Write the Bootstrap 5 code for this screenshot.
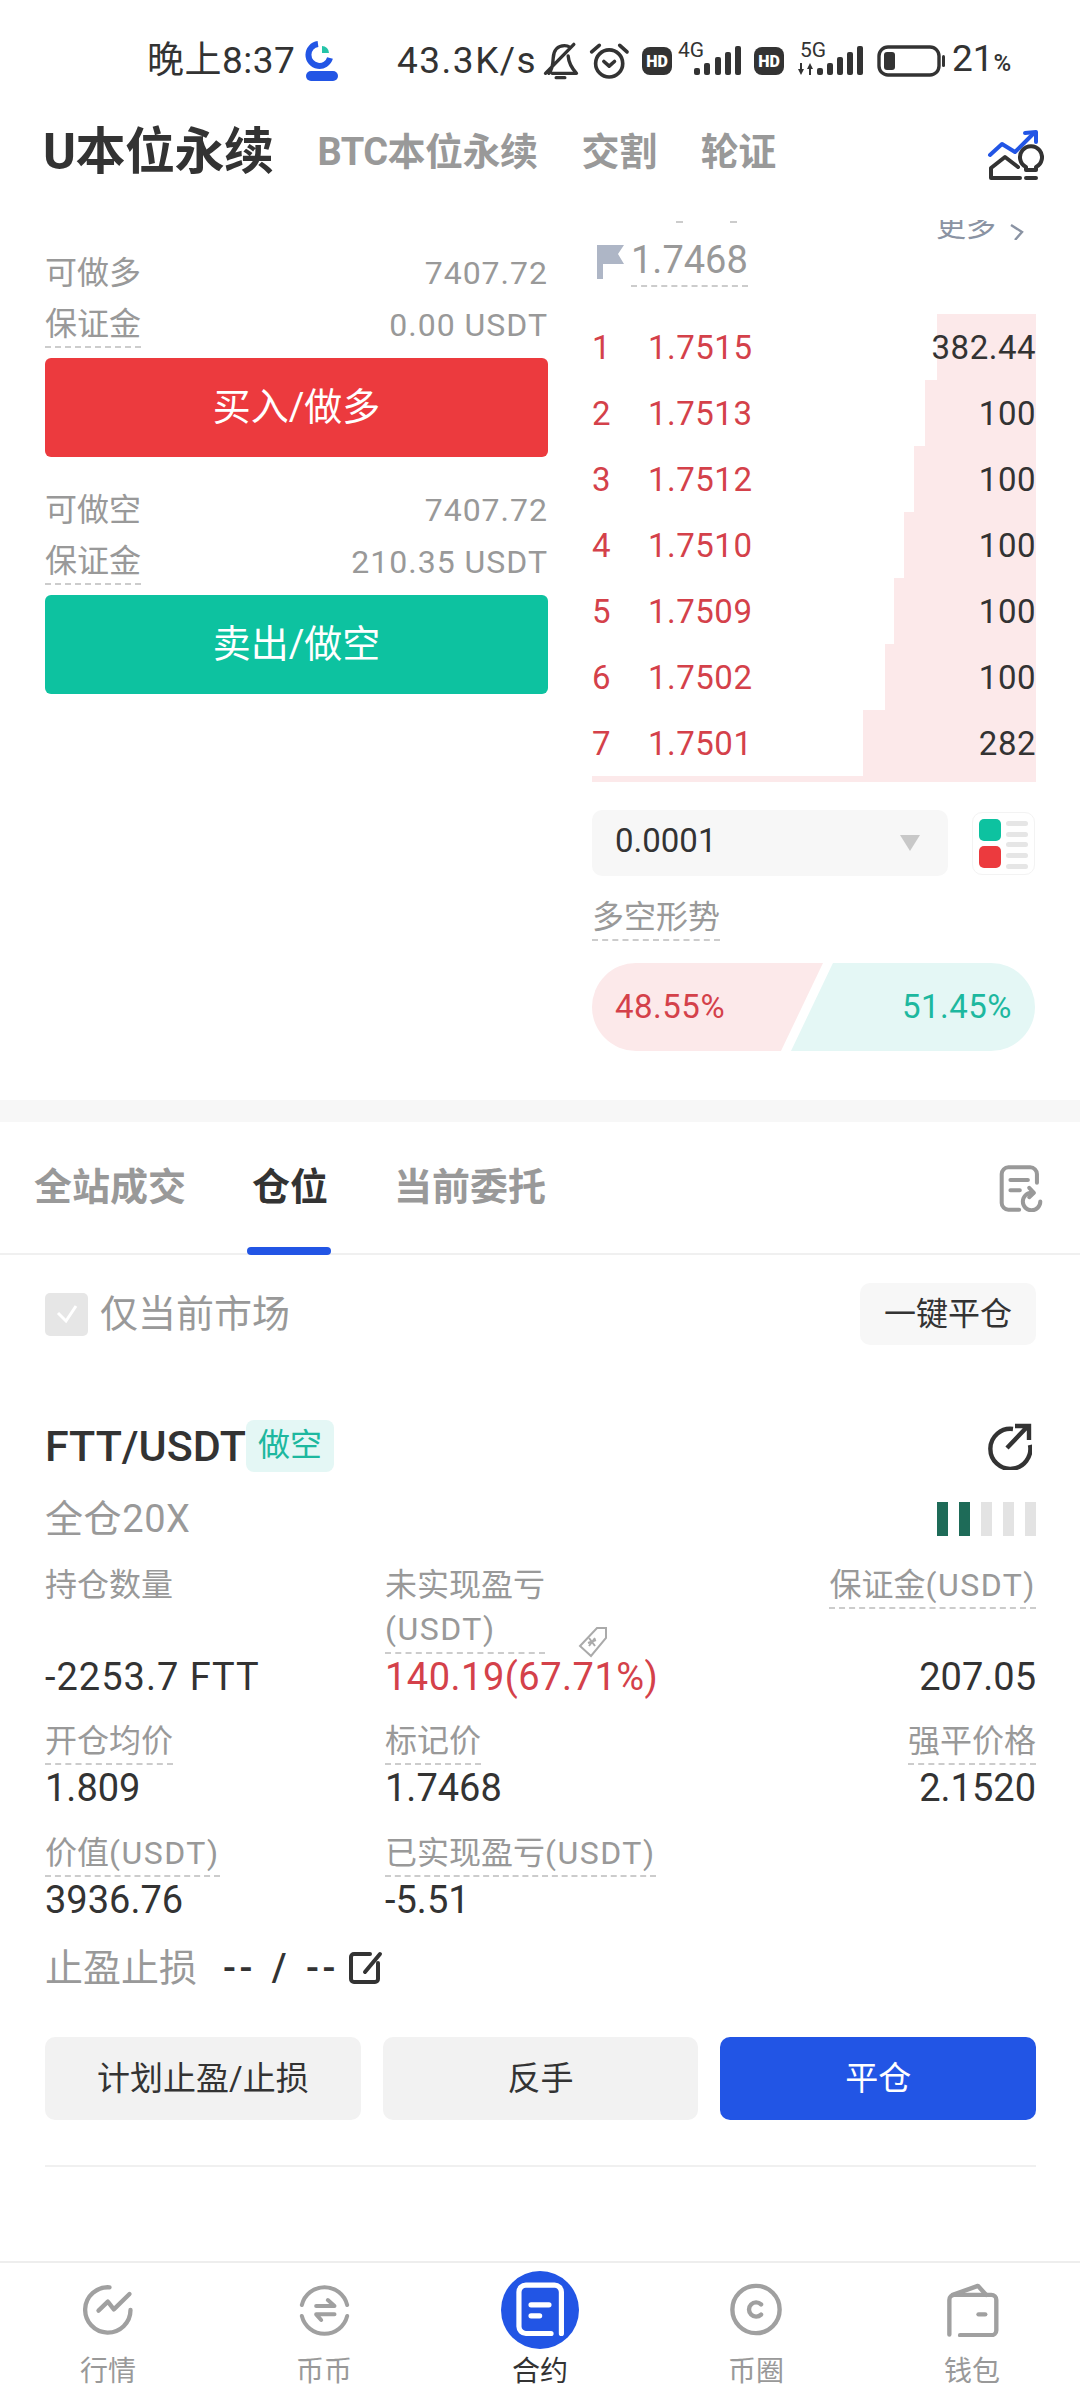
<!DOCTYPE html>
<html lang="zh">

<head>
  <meta charset="UTF-8" />
  <meta name="viewport" content="width=device-width, initial-scale=1" />
  <title>合约</title>
  <link href="https://cdn.jsdelivr.net/npm/bootstrap@5.3.3/dist/css/bootstrap.min.css" rel="stylesheet">
  <style>
    body { width: 1080px; height: 2400px; overflow: hidden; background: #fff; color: #333; font-family: Roboto, "Noto Sans CJK SC", sans-serif; font-size: 32px; }
    .app { height: 2400px; }
    .grey { color: #999; }
    .dash { display: inline-block; border-bottom: 2px dashed #ccc; line-height: 44px; height: 46px; }
    .wide-latin { letter-spacing: 1.5px; }

    .status { height: 120px; padding: 2px 0 0 147px; font-size: 37px; line-height: 60px; color: #333; }
    .status-time { width: 158px; letter-spacing: .5px; }
    .status-speed { margin-left: 58px; width: 145px; letter-spacing: 1.5px; }
    .net-ico { margin-bottom: 10px; }
    .top-head { height: 100px; padding: 0 36px 36px 43px; }
    .top-head svg { margin-top: 8px; }
    .top-head .main-title { font-size: 50px; font-weight: 700; line-height: 64px; margin-right: 44px; letter-spacing: -.5px; }
    .top-head .sub-title { font-size: 38px; font-weight: 700; color: #999; line-height: 64px; margin-right: 44px; letter-spacing: -.5px; }

    .market { height: 880px; overflow: hidden; padding: 0 44px 0 45px; }
    .left-col { width: 503px; margin-top: 26px; margin-right: 44px; }
    .right-col { width: 444px; }
    .info-row { height: 52px; padding-top: 2px; letter-spacing: 1px; }
    .info-row span:first-child { letter-spacing: 0; }
    .short-start { margin-top: 26px; }
    .act-btn { height: 99px; font-size: 38px; color: #fff; border: 0; border-radius: 6px; margin-top: 8px; width: 100%; }
    .act-long { background: #ec3a3e; }
    .act-short { background: #0dc2a0; margin-bottom: 0; }
    .more-row { height: 29px; margin-top: -14px; font-size: 30px; line-height: 40px; color: #8a93a3; padding-right: 11px; }
    .more-row svg { margin-left: 14px; margin-top: 18px; }
    .cut-dashes { margin: 15px auto 0 84px !important; }
    .price-row { height: 51px; margin-bottom: 28px; padding-left: 5px; }
    .price-row .dash { font-size: 38px; line-height: 50px; height: 52px; color: #999; margin-left: 7px; }
    .depth-row { height: 66px; position: relative; font-size: 33px; line-height: 68px; letter-spacing: .5px; }
    .depth-bar { position: absolute; top: 0; bottom: 0; right: 0; background: #fce9ea; }
    .depth-row span { position: relative; }
    .depth-no { width: 56px; color: #d4414a; }
    .depth-price { color: #d4414a; }
    .depth-end { height: 6px; background: #fce9ea; margin-bottom: 28px; }
    .step-box { width: 356px; height: 66px; background: #f7f7f7; border-radius: 10px; padding: 0 23px 4px; font-size: 33px; }
    .step-arrow { width: 20px; height: 16px; background: #c8c8c8; clip-path: polygon(0 0, 100% 0, 50% 100%); margin: 4px 5px 0 0; }
    .view-box { width: 63px; height: 63px; border: 1px solid #f3f3f3; border-radius: 10px; margin-left: 24px; margin-top: 2px; }
    .ratio-title { margin-top: 17px; margin-bottom: 22px; color: #999; }
    .ratio-l, .ratio-r { height: 88px; font-size: 33px; letter-spacing: .5px; padding: 0 23px; }
    .ratio-l { width: 231px; background: #fce9ea; color: #d4414a; border-radius: 44px 0 0 44px; clip-path: polygon(0 0, 100% 0, 81.8% 100%, 0 100%); }
    .ratio-r { width: 244px; margin-left: -32px; background: #e4f7f5; color: #1db89f; border-radius: 0 44px 44px 0; clip-path: polygon(17.2% 0, 100% 0, 100% 100%, 0 100%); }

    .band { height: 22px; background: #f7f7f7; }
    .tab-bar { height: 133px; padding: 40px 35px 0 34px; gap: 66px; border-bottom: 2px solid #f0f0f0; font-size: 38px; font-weight: 700; line-height: 50px; color: #999; }
    .tab-bar svg { margin-top: 3px; }
    .tab-on { color: #333; position: relative; }
    .tab-on::after { content: ""; position: absolute; left: -5px; right: -3px; bottom: -2px; height: 8px; background: #2255e5; border-radius: 4px; }

    .filter-row { padding: 28px 44px 0 45px; height: 90px; }
    .fake-check { width: 43px; height: 43px; border-radius: 5px; background: #e6e6e6; margin-right: 12px; }
    .filter-label { font-size: 38px; color: #999; }
    .close-all { width: 176px; height: 62px; padding: 0; font-size: 32px; background: #f7f7f7; border: 0; border-radius: 10px; color: #333; }

    .pos-head { height: 52px; margin-top: 75px; padding: 0 48px 0 45px; }
    .pos-name { font-size: 43px; font-weight: 500; }
    .side-tag { width: 88px; height: 52px; line-height: 50px; text-align: center; background: #e4f7f5; color: #1db89f; border-radius: 8px; font-size: 32px; }
    .pos-sub { height: 48px; margin-top: 23px; padding: 0 44px 0 45px; font-size: 38px; color: #999; line-height: 48px; }
    .pos-sub > span { letter-spacing: .6px; }
    .lev-bars { gap: 11px; }
    .lev-bars i { display: block; width: 11px; height: 34px; background: #e3e3e3; }
    .lev-bars i.on { background: #1e6b58; }

    .field-grid { display: grid; grid-template-columns: 340px 1fr auto; padding: 0 44px 0 45px; margin-top: 20px; }
    .field-grid > div { display: flex; flex-direction: column; }
    .field-label { color: #999; line-height: 44px; }
    .field-val { font-size: 38px; line-height: 46px; color: #333; }
    .val-qty { letter-spacing: 1px; }
    .val-red { color: #d4414a; letter-spacing: .5px; }
    .gap-a { margin-top: 19px; }
    .gap-b { margin-top: 20px; }
    .tag-ico { position: absolute; left: 193px; top: 63px; }

    .sl-row { height: 50px; margin-top: 20px; padding: 0 45px; }
    .sl-label { font-size: 38px; color: #999; margin-right: 26px; }
    .sl-val { font-size: 38px; font-weight: 500; width: 124px; letter-spacing: 3.5px; word-spacing: 3px; }

    .op-row { margin-top: 44px; padding: 0 44px 0 45px; gap: 22px; }
    .op-btn { height: 83px; flex: 1; padding: 0; font-size: 33px; border: 0; border-radius: 10px; background: #f2f2f2; color: #333; }
    .op-main { background: #2255e5; color: #fff; }
    .line-end { height: 2px; margin: 45px 44px 0 45px; background: #f0f0f0; }

    .tabbar { margin-top: auto; height: 139px; border-top: 2px solid #eee; padding-top: 7px; }
    .tabbar-item { width: 216px; font-size: 28px; color: #999; line-height: 36px; text-align: center; }
    .tabbar-ico { height: 79px; margin-bottom: 5px; }
    .tabbar-on { color: #333; }
  </style>
</head>

<body>
  <div class="app d-flex flex-column">
    <!-- barra de estado -->
    <div class="status d-flex align-items-center">
      <span class="status-time">晚上8:37</span>
      <svg width="34" height="42" viewBox="0 0 34 42"><path d="M13 4a11 11 0 1 0 12 14" fill="none" stroke="#2255e5" stroke-width="6"/><path d="M17 6a7 7 0 0 1 7 7h-7z" fill="#25c4a8"/><rect x="1" y="31" width="32" height="10" rx="5" fill="#2255e5"/></svg>
      <span class="status-speed">43.3K/s</span>
      <svg width="37" height="40" viewBox="30 45 110 120" fill="none" stroke="#333" stroke-width="10" stroke-linecap="round" stroke-linejoin="round"><path d="M125 55 40 142M50 142c10-10 12-22 13-45 1-25 14-38 34-38 6 0 11 1 15 4M108 90c2 25 12 38 25 52H60M72 155h26"/></svg>
      <svg style="margin-left:9px" width="43" height="39" viewBox="175 45 128 118" fill="none" stroke="#333" stroke-width="11" stroke-linecap="round" stroke-linejoin="round"><circle cx="238" cy="110" r="41"/><path d="M222 104l16 14 16-14M185 75l23-20M292 75l-22-20"/></svg>
      <svg style="margin-left:11px" width="30" height="28" viewBox="0 0 30 28"><rect width="30" height="28" rx="8" fill="#333"/><text x="15" y="20" fill="#fff" font-size="16" font-weight="900" text-anchor="middle" font-family="Roboto">HD</text></svg>
      <svg class="net-ico" style="margin-left:6px" width="64" height="40" viewBox="0 -4 64 40"><text x="0" y="17" fill="#333" font-size="21" font-family="Roboto">4G</text><g fill="#333"><rect x="16" y="28" width="6" height="7" rx="2"/><rect x="26" y="23" width="6" height="12" rx="2"/><rect x="37" y="17" width="6" height="18" rx="2"/><rect x="47" y="12" width="6" height="23" rx="2"/><rect x="57" y="6" width="6" height="29" rx="2"/></g></svg>
      <svg style="margin-left:12px" width="30" height="28" viewBox="0 0 30 28"><rect width="30" height="28" rx="8" fill="#333"/><text x="15" y="20" fill="#fff" font-size="16" font-weight="900" text-anchor="middle" font-family="Roboto">HD</text></svg>
      <svg class="net-ico" style="margin-left:13px" width="66" height="40" viewBox="0 -4 66 40"><text x="3" y="17" fill="#333" font-size="21" font-family="Roboto">5G</text><g fill="#333"><path d="M1 29l3 6 3-6H5v-6H3v6zM10 29l3-6 3 6h-2v6h-2v-6z"/><rect x="20" y="28" width="6" height="7" rx="2"/><rect x="30" y="23" width="6" height="12" rx="2"/><rect x="40" y="17" width="6" height="18" rx="2"/><rect x="50" y="12" width="6" height="23" rx="2"/><rect x="60" y="6" width="6" height="29" rx="2"/></g></svg>
      <svg style="margin-left:14px" width="68" height="32" viewBox="0 0 68 32" fill="none"><rect x="2" y="2" width="60" height="28" rx="9" stroke="#333" stroke-width="3.4"/><rect x="7" y="7" width="11" height="18" rx="3" fill="#333"/><rect x="65" y="10" width="3" height="12" rx="1.5" fill="#333"/></svg>
      <span style="margin-left:7px">21<small style="font-size:24px;font-weight:500">%</small></span>
    </div>

    <!-- titulo -->
    <div class="top-head d-flex align-items-start">
      <span class="main-title">U本位永续</span>
      <span class="sub-title">BTC本位永续</span>
      <span class="sub-title">交割</span>
      <span class="sub-title">轮证</span>
      <svg class="ms-auto" width="58" height="54" viewBox="26 18 58 54" fill="none" stroke="#333" stroke-width="4" stroke-linecap="round" stroke-linejoin="round"><path d="M31 68V58l14-11 13 10M31 68h29"/><path d="M30 45l12-11 13 8 19-19" stroke="#2255e5"/><path d="M65 23l11-1v10" stroke="#2255e5"/><path d="M66 60v-3a11 11 0 1 1 10 0v3zM66 68h10"/></svg>
    </div>

    <!-- mercado -->
    <div class="market d-flex">
      <div class="left-col">
        <div class="info-row d-flex justify-content-between align-items-center grey"><span>可做多</span><span>7407.72</span></div>
        <div class="info-row d-flex justify-content-between align-items-center grey"><span class="dash">保证金</span><span>0.00 USDT</span></div>
        <button class="btn act-btn act-long">买入/做多</button>
        <div class="info-row d-flex justify-content-between align-items-center grey short-start"><span>可做空</span><span>7407.72</span></div>
        <div class="info-row d-flex justify-content-between align-items-center grey"><span class="dash">保证金</span><span>210.35 USDT</span></div>
        <button class="btn act-btn act-short">卖出/做空</button>
      </div>

      <div class="right-col">
        <div class="more-row d-flex justify-content-end">
          <svg class="cut-dashes" width="62" height="2" viewBox="0 0 62 2"><rect width="7" height="2" fill="#ccc"/><rect x="54" width="7" height="2" fill="#ccc"/></svg>
          <span>更多</span>
          <svg width="15" height="16" viewBox="0 0 15 16" fill="none" stroke="#8a93a3" stroke-width="2.4"><path d="M1 1l11 7-7 8"/></svg>
        </div>
        <div class="price-row d-flex align-items-center">
          <svg width="27" height="36" viewBox="0 0 27 36"><path d="M0 2h27l-6 9 6 10H6v15H0z" fill="#aeb6c6"/></svg>
          <span class="dash">1.7468</span>
        </div>

        <div id="profundidad"></div>
        <div class="depth-end"></div>

        <div class="d-flex">
          <div class="step-box d-flex align-items-center justify-content-between"><span>0.0001</span><div class="step-arrow"></div></div>
          <div class="view-box d-flex align-items-center justify-content-center">
            <svg width="50" height="50" viewBox="0 0 50 50"><rect x="0" y="0" width="22" height="22" rx="5" fill="#0dc2a0"/><rect x="0" y="27" width="22" height="22" rx="5" fill="#ec3a3e"/><g fill="#e6e6e6"><rect x="27" y="2" width="22" height="5" rx="2.5"/><rect x="27" y="13" width="22" height="5" rx="2.5"/><rect x="27" y="23" width="22" height="5" rx="2.5"/><rect x="27" y="34" width="22" height="5" rx="2.5"/><rect x="27" y="45" width="22" height="5" rx="2.5"/></g></svg>
          </div>
        </div>

        <div class="ratio-title"><span class="dash">多空形势</span></div>
        <div class="d-flex">
          <div class="ratio-l d-flex align-items-center">48.55%</div>
          <div class="ratio-r d-flex align-items-center justify-content-end">51.45%</div>
        </div>
      </div>
    </div>

    <div class="band"></div>

    <!-- pestañas -->
    <div class="tab-bar d-flex">
      <span>全站成交</span>
      <span class="tab-on">仓位</span>
      <span>当前委托</span>
      <svg class="ms-auto" width="47" height="47" viewBox="55 45 140 140" fill="none" stroke="#999" stroke-width="12" stroke-linecap="round"><path d="M171 98V72a20 20 0 0 0-20-20H86a20 20 0 0 0-20 20v86a20 20 0 0 0 20 20h32"/><path d="M92 90h52M92 120h28"/><path d="M181 154a26 26 0 1 1-26-26"/><path d="M148 113l14 15-14 13" stroke-linejoin="round"/></svg>
    </div>

    <div class="filter-row d-flex justify-content-between">
      <div class="d-flex align-items-center">
        <div class="fake-check d-flex align-items-center justify-content-center">
          <svg width="24" height="20" viewBox="0 0 24 20" fill="none" stroke="#fff" stroke-width="3"><path d="M3 9l8 8L21 2"/></svg>
        </div>
        <span class="filter-label">仅当前市场</span>
      </div>
      <button class="btn close-all">一键平仓</button>
    </div>

    <!-- posicion -->
    <div class="pos-head d-flex align-items-center">
      <span class="pos-name">FTT/USDT</span>
      <span class="side-tag">做空</span>
      <svg class="ms-auto" width="46" height="48" viewBox="0 0 46 48" fill="none" stroke="#333" stroke-width="4.4"><path d="M27 7a20 20 0 1 0 17 16"/><path d="M21 26 41 5M29 4h14v14"/></svg>
    </div>
    <div class="pos-sub d-flex justify-content-between">
      <span>全仓20X</span>
      <div class="lev-bars d-flex align-items-center"><i class="on"></i><i class="on"></i><i></i><i></i><i></i></div>
    </div>

    <div class="field-grid">
      <div class="justify-content-between"><span class="field-label">持仓数量</span><span class="field-val val-qty">-2253.7 FTT</span></div>
      <div class="position-relative">
        <span class="field-label dash align-self-start" style="height:91px">未实现盈亏<br><span class="wide-latin">(USDT)</span></span>
        <svg class="tag-ico" width="30" height="32" viewBox="0 0 30 32" fill="none" stroke="#aaa" stroke-width="2"><path d="M19 2h9v10L13 30 2 20z"/><path d="M10 17l8-3M11 12l6 8M17 12l-6 8"/></svg>
        <span class="field-val val-red">140.19(67.71%)</span>
      </div>
      <div class="align-items-end justify-content-between"><span class="field-label dash">保证金<span class="wide-latin">(USDT)</span></span><span class="field-val">207.05</span></div>

      <div class="gap-a"><span class="field-label dash align-self-start">开仓均价</span><span class="field-val">1.809</span></div>
      <div class="gap-a"><span class="field-label dash align-self-start">标记价</span><span class="field-val">1.7468</span></div>
      <div class="gap-a align-items-end"><span class="field-label dash">强平价格</span><span class="field-val">2.1520</span></div>

      <div class="gap-b"><span class="field-label dash align-self-start">价值<span class="wide-latin">(USDT)</span></span><span class="field-val">3936.76</span></div>
      <div class="gap-b"><span class="field-label dash align-self-start">已实现盈亏<span class="wide-latin">(USDT)</span></span><span class="field-val">-5.51</span></div>
      <div class="gap-b"></div>
    </div>

    <div class="sl-row d-flex align-items-center">
      <span class="sl-label">止盈止损</span>
      <span class="sl-val">-- / --</span>
      <svg width="36" height="36" viewBox="0 0 36 36" fill="none" stroke="#333" stroke-width="4" stroke-linecap="round"><path d="M23 4H7a3 3 0 0 0-3 3v22a3 3 0 0 0 3 3h21a3 3 0 0 0 3-3V13M33 4 18 22"/></svg>
    </div>

    <div class="op-row d-flex">
      <button class="btn op-btn">计划止盈/止损</button>
      <button class="btn op-btn">反手</button>
      <button class="btn op-btn op-main">平仓</button>
    </div>
    <div class="line-end"></div>

    <!-- navegacion -->
    <div class="tabbar d-flex">
      <div class="tabbar-item">
        <div class="tabbar-ico d-flex align-items-center justify-content-center">
          <svg width="51" height="52" viewBox="66 52 152 156" fill="none" stroke="#a0a0a0" stroke-width="13" stroke-linecap="round" stroke-linejoin="round"><path d="M145 62A68 68 0 1 0 208 130"/><path d="M112 132l28-27 18 23 47-46"/></svg>
        </div>
        <div>行情</div>
      </div>
      <div class="tabbar-item">
        <div class="tabbar-ico d-flex align-items-center justify-content-center">
          <svg width="51" height="52" viewBox="714 52 152 156" fill="none" stroke="#a0a0a0" stroke-width="12" stroke-linecap="round" stroke-linejoin="round"><path d="M722 115a70 70 0 0 1 136 0M858 148a70 70 0 0 1-136 0"/><path d="M765 118h55l-20-18M820 143h-55l15 17"/></svg>
        </div>
        <div>币币</div>
      </div>
      <div class="tabbar-item tabbar-on">
        <div class="tabbar-ico d-flex align-items-center justify-content-center">
          <svg width="78" height="78" viewBox="33 17 226 226"><circle cx="146" cy="130" r="113" fill="#2255e5"/><path d="M178 198h-73a20 20 0 0 1-20-20V78a20 20 0 0 1 20-20h83a20 20 0 0 1 20 20v120" fill="none" stroke="#fff" stroke-width="15" stroke-linecap="round"/><path d="M120 115h52M120 147h25" fill="none" stroke="#fff" stroke-width="15" stroke-linecap="round"/></svg>
        </div>
        <div>合约</div>
      </div>
      <div class="tabbar-item">
        <div class="tabbar-ico d-flex align-items-center justify-content-center">
          <svg width="52" height="53" viewBox="708 52 154 156" fill="none" stroke="#a0a0a0" stroke-width="13"><circle cx="785" cy="130" r="70"/><path d="M800 115a21 21 0 1 0 0 30" stroke-linecap="round"/></svg>
        </div>
        <div>币圈</div>
      </div>
      <div class="tabbar-item">
        <div class="tabbar-ico d-flex align-items-center justify-content-center">
          <svg width="53" height="54" viewBox="1345 50 158 160" fill="none" stroke="#a0a0a0" stroke-width="13" stroke-linecap="round" stroke-linejoin="round"><path d="M1355 203v-103a15 15 0 0 1 15-15h110a15 15 0 0 1 15 15v90a15 15 0 0 1-15 15h-93"/><path d="M1365 85l75-27 25 27"/><path d="M1442 143h20"/></svg>
        </div>
        <div>钱包</div>
      </div>
    </div>
  </div>

  <script src="https://cdn.jsdelivr.net/npm/bootstrap@5.3.3/dist/js/bootstrap.bundle.min.js"></script>
  <script>
    // filas del libro de ordenes
    const filas = [
      ['1.7515', '382.44', 99],
      ['1.7513', '100', 111],
      ['1.7512', '100', 122],
      ['1.7510', '100', 132],
      ['1.7509', '100', 142],
      ['1.7502', '100', 151],
      ['1.7501', '282', 173]
    ];
    document.getElementById('profundidad').innerHTML = filas.map((f, i) => `
      <div class="depth-row d-flex">
        <div class="depth-bar" style="width:${f[2]}px"></div>
        <span class="depth-no">${i + 1}</span>
        <span class="depth-price">${f[0]}</span>
        <span class="ms-auto">${f[1]}</span>
      </div>`).join('');
  </script>
</body>

</html>
